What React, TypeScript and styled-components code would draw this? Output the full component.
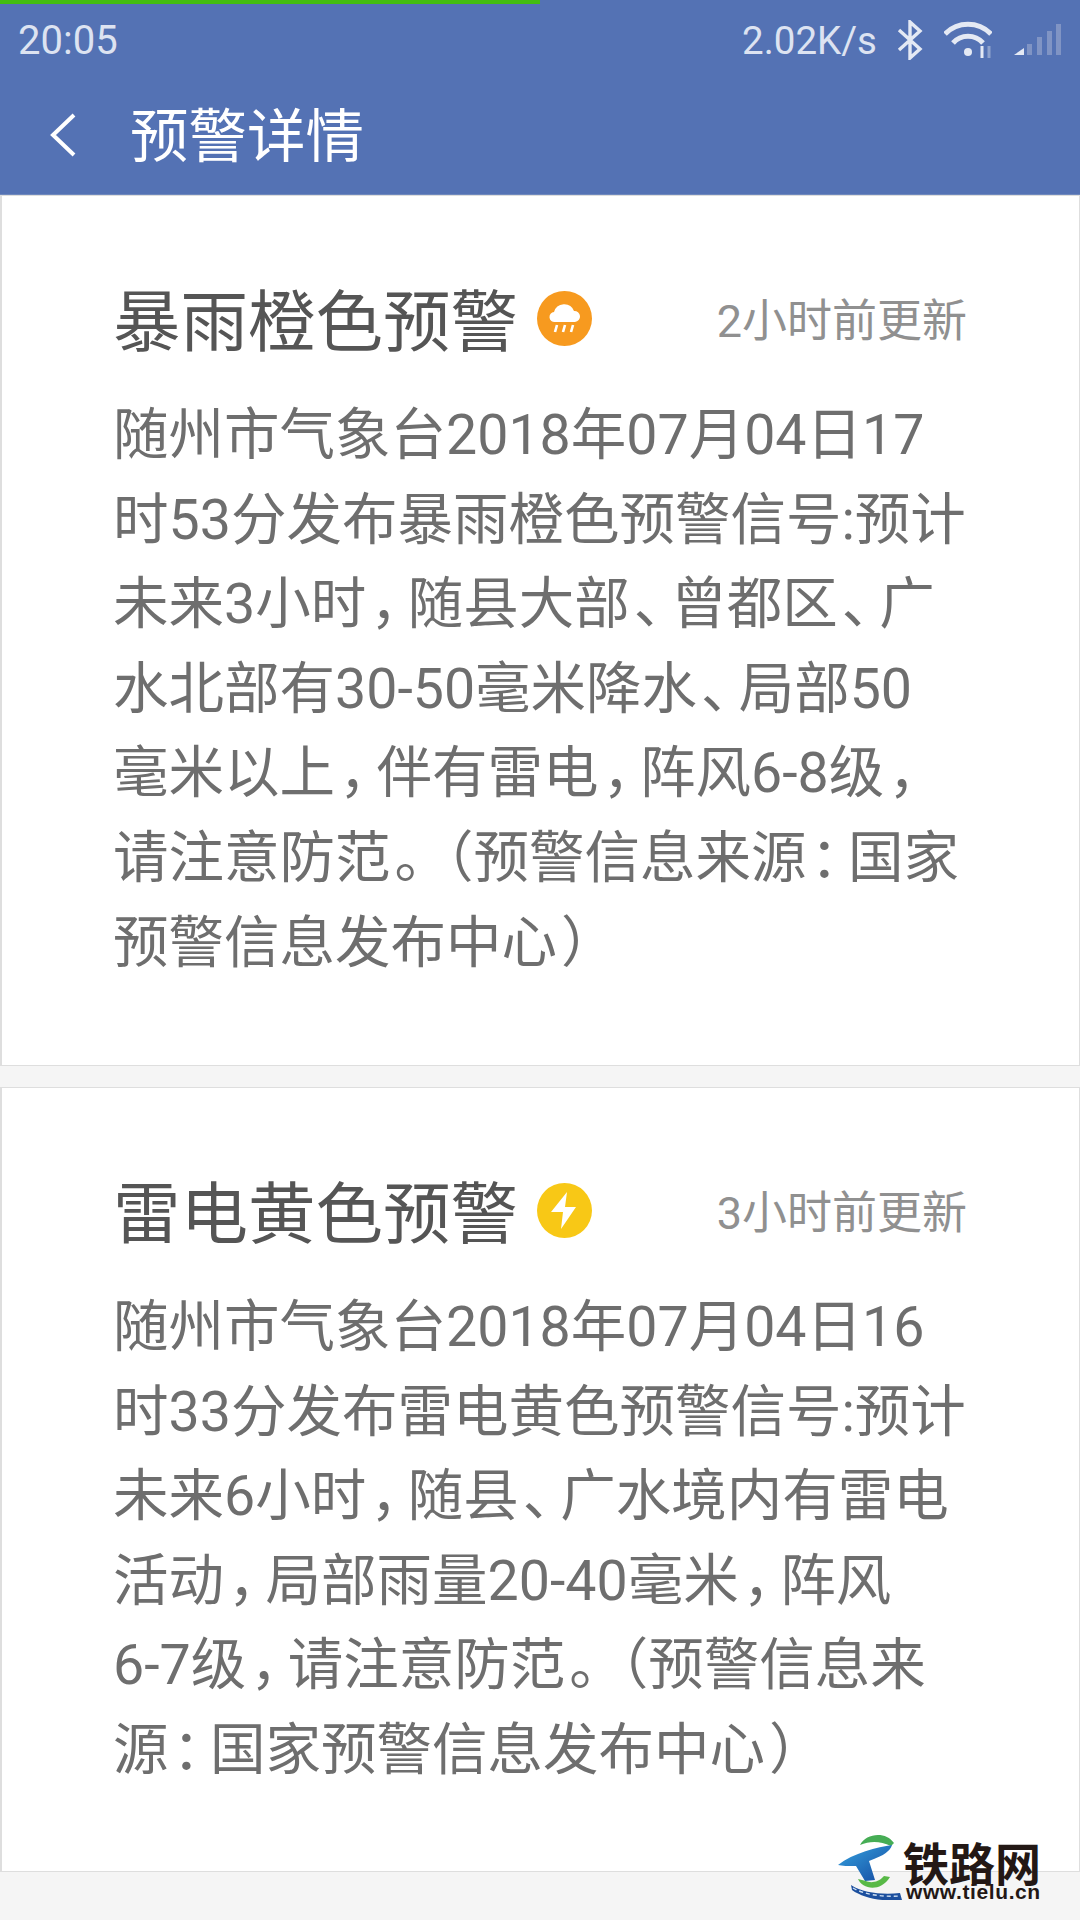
import { createGlobalStyle } from 'styled-components'
import styled from 'styled-components'

const GlobalStyle = createGlobalStyle`
  html, body {
    margin: 0;
    padding: 0;
    background: #f5f5f5;
  }
  * {
    box-sizing: border-box;
  }
`

const Page = styled.div`
  position: relative;
  width: 1080px;
  height: 1920px;
  overflow: hidden;
  background: #f5f5f5;
  font-family: Roboto, 'Noto Sans CJK SC', sans-serif;
`

const Header = styled.header`
  position: relative;
  height: 195px;
  background: #5472b4;
  border-bottom: 1px solid #6f88bd;
`

const LoadBar = styled.div`
  position: absolute;
  top: 0;
  left: 0;
  height: 4px;
  background: #43bd11;
`

const StatusBar = styled.div`
  display: flex;
  align-items: center;
  justify-content: space-between;
  height: 80px;
  padding: 0 18px;
  color: #dde3f1;
  font-size: 40px;
`

const StatusRight = styled.div`
  display: flex;
  align-items: center;
`

const Speed = styled.span`
  margin-right: 20px;
  font-size: 38.5px;
`

const IconSlot = styled.span<{ $gap: number }>`
  display: flex;
  margin-left: ${props => props.$gap}px;
`

const TitleBar = styled.div`
  display: flex;
  align-items: center;
  height: 110px;
  padding: 0 0 0 50px;
`

const PageTitle = styled.h1`
  margin: 5px 0 0 54px;
  color: #fff;
  font-size: 58.5px;
  font-weight: 400;
  line-height: 1;
`

const Card = styled.section<{ $height: number }>`
  height: ${props => props.$height}px;
  padding: 89px 112px 0 111px;
  background: #fff;
  border: 1px solid #dedede;
  border-left-width: 2px;
`

const Cards = styled.div`
  display: flex;
  flex-direction: column;
  gap: 21px;
`

const CardHead = styled.div`
  display: flex;
  align-items: center;
  height: 67px;
`

const CardTitle = styled.h2`
  margin: 9px 19px 0 0;
  color: #555;
  font-size: 67.5px;
  font-weight: 400;
  line-height: 1;
  white-space: nowrap;
`

const Updated = styled.span`
  margin: 0 0 2px auto;
  color: #909090;
  font-size: 45px;
  white-space: nowrap;
`

const Body = styled.p`
  margin: 42px 0 0;
  color: #6e6e6e;
  font-size: 55.5px;
  line-height: 84.6px;
  text-spacing-trim: space-all;
`

const Line = styled.span`
  display: block;
  white-space: nowrap;
`

// the phone's font sets full-width punctuation narrower than Noto does
const Punct = styled.span<{ $spacing: number }>`
  margin-left: 4px;
  letter-spacing: ${props => props.$spacing}px;
`

const Watermark = styled.div`
  position: absolute;
  left: 838px;
  top: 1833px;
  display: flex;
`

const LogoWords = styled.div`
  display: flex;
  flex-direction: column;
  margin-left: 1px;
`

const LogoName = styled.span`
  margin-top: 8px;
  color: #231815;
  font-family: 'Noto Sans CJK SC', sans-serif;
  font-size: 46px;
  font-weight: 700;
  line-height: 40px;
  white-space: nowrap;
`

const LogoUrl = styled.span`
  margin-left: 3px;
  color: #231815;
  font-family: 'Liberation Sans', sans-serif;
  font-size: 21px;
  font-weight: 700;
  line-height: 22px;
  letter-spacing: 0.6px;
  white-space: nowrap;
`

const BluetoothIcon = () => (
  <svg width="26" height="40" viewBox="0 0 26 40" fill="none" stroke="#e4e9f4" strokeWidth="3.4">
    <path d="M2 10l21 19-10 9V2l10 9L2 30" />
  </svg>
)

const WifiIcon = () => (
  <svg width="48" height="40" viewBox="0 0 48 40" fill="none">
    <path d="M1 14A32 32 0 0 1 47 14" stroke="#e4e9f4" strokeWidth="5" />
    <path d="M9 23A20 20 0 0 1 39 23" stroke="#e4e9f4" strokeWidth="5" />
    <circle cx="24" cy="32" r="4" fill="#e4e9f4" />
    <path d="M38 26v12" stroke="#e4e9f4" strokeWidth="3" />
    <path d="M45 26v12" stroke="#8ea2cd" strokeWidth="3" />
  </svg>
)

const SignalIcon = () => (
  <svg width="48" height="36" viewBox="0 0 48 36">
    <path d="M0 33l10-7v7z" fill="#e4e9f4" />
    <path d="M13 22h5v11h-5zM23 15h5v18h-5zM33 9h5v24h-5zM42 2h5v31h-5z" fill="#8094c4" />
  </svg>
)

const BackIcon = () => (
  <svg width="26" height="48" viewBox="0 0 26 48" fill="none" stroke="#fff" strokeWidth="4">
    <path d="M24 4L3 24l21 20" />
  </svg>
)

const RainBadge = () => (
  <svg width="55" height="55" viewBox="0 0 55 55">
    <circle cx="27.5" cy="27.5" r="27.5" fill="#f79a1f" />
    <path d="M18 31a5 5 0 0 1-1-10 10.5 10.5 0 0 1 20-1 5.5 5.5 0 0 1 1 11z" fill="#fff" />
    <path d="M20 34l-2 7M28 34l-2 7M36 34l-2 7" stroke="#fff" strokeWidth="2.6" />
  </svg>
)

const BoltBadge = () => (
  <svg width="55" height="55" viewBox="0 0 55 55">
    <circle cx="27.5" cy="27.5" r="27.5" fill="#f8c816" />
    <path d="M30 9L14 29h12l-2 17 15-22H28z" fill="#fff" />
  </svg>
)

const LogoMark = () => (
  <svg width="64" height="67" viewBox="0 0 64 67">
    <defs>
      <linearGradient id="tBlue" x1="0" y1="0" x2="1" y2="1">
        <stop offset="0" stopColor="#35a3e0" />
        <stop offset="1" stopColor="#14489f" />
      </linearGradient>
    </defs>
    <path d="M22 12C28 0 48-2 56 10l-3 3C42 8 32 8 22 12z" fill="#46ad55" />
    <path d="M0 32C15 20 40 14 54 12 52 18 47 22 31 28l6 19-10 1-9-15C10 33 4 33 0 32z" fill="url(#tBlue)" />
    <path d="M20 46c4 10 22 14 32-2l-6-1c-6 7-14 7-18 5z" fill="#58b947" />
    <path d="M13 52c12 8 32 10 49 8l2 7c-19 2-39-2-50-10z" fill="#1c4f9e" />
    <path d="M15 55c12 7 30 9 47 8" fill="none" stroke="#cfe0f2" strokeWidth="1.4" strokeDasharray="4 3" />
  </svg>
)

// 。 always comes before （ here, so it takes up the room for both
const splitPunct = (line: string) =>
  line.split(/([，、：。）])/).map((part, i) =>
    i % 2 === 1 ? (
      <Punct key={i} $spacing={part === '。' ? -32 : -18}>
        {part}
      </Punct>
    ) : (
      part
    )
  )

const warnings = [
  {
    title: '暴雨橙色预警',
    updated: '2小时前更新',
    badge: <RainBadge />,
    height: 871,
    lines: [
      '随州市气象台2018年07月04日17',
      '时53分发布暴雨橙色预警信号:预计',
      '未来3小时，随县大部、曾都区、广',
      '水北部有30-50毫米降水、局部50',
      '毫米以上，伴有雷电，阵风6-8级，',
      '请注意防范。（预警信息来源：国家',
      '预警信息发布中心）',
    ],
  },
  {
    title: '雷电黄色预警',
    updated: '3小时前更新',
    badge: <BoltBadge />,
    height: 785,
    lines: [
      '随州市气象台2018年07月04日16',
      '时33分发布雷电黄色预警信号:预计',
      '未来6小时，随县、广水境内有雷电',
      '活动，局部雨量20-40毫米，阵风',
      '6-7级，请注意防范。（预警信息来',
      '源：国家预警信息发布中心）',
    ],
  },
]

export default function App() {
  return (
    <Page>
      <GlobalStyle />
      <Header>
        <LoadBar style={{ width: '50%' }} />
        <StatusBar>
          <span>20:05</span>
          <StatusRight>
            <Speed>2.02K/s</Speed>
            <BluetoothIcon />
            <IconSlot $gap={21}>
              <WifiIcon />
            </IconSlot>
            <IconSlot $gap={22}>
              <SignalIcon />
            </IconSlot>
          </StatusRight>
        </StatusBar>
        <TitleBar>
          <BackIcon />
          <PageTitle>预警详情</PageTitle>
        </TitleBar>
      </Header>
      <Cards>
        {warnings.map(w => (
          <Card key={w.title} $height={w.height}>
            <CardHead>
              <CardTitle>{w.title}</CardTitle>
              {w.badge}
              <Updated>{w.updated}</Updated>
            </CardHead>
            <Body>
              {w.lines.map(line => (
                <Line key={line}>{splitPunct(line)}</Line>
              ))}
            </Body>
          </Card>
        ))}
      </Cards>
      <Watermark>
        <LogoMark />
        <LogoWords>
          <LogoName>铁路网</LogoName>
          <LogoUrl>www.tielu.cn</LogoUrl>
        </LogoWords>
      </Watermark>
    </Page>
  )
}
